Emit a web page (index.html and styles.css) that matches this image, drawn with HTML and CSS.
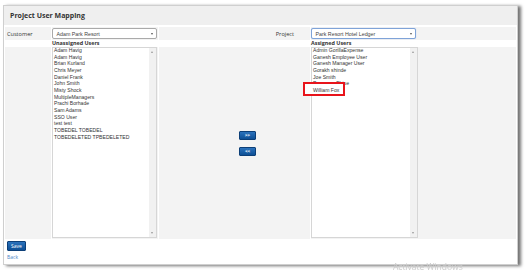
FILE: index.html
```html
<!DOCTYPE html>
<html>
<head>
<meta charset="utf-8">
<title>Project User Mapping</title>
<link rel="stylesheet" href="styles.css">
</head>
<body>
<div class="page">
  <div class="panel">
    <div class="header"><h1 class="title">Project User Mapping</h1></div>
    <div class="form">
      <div class="cell gray lbl">Customer</div>
      <div class="cell gray"><div class="select"><span class="val">Adam Park Resort</span><i class="caret"></i></div></div>
      <div class="cell gray lbl proj">Project</div>
      <div class="cell gray"><div class="select focus"><span class="val">Park Resort Hotel Ledger</span><i class="caret"></i></div></div>

      <div class="cell"></div>
      <div class="cell sub">Unassigned Users</div>
      <div class="cell"></div>
      <div class="cell sub">Assigned Users</div>

      <div class="cell gray"></div>
      <div class="cell gray">
        <div class="listbox">
          <ul class="items">
            <li>Adam Havig</li>
            <li>Adam Havig</li>
            <li>Brian Kurland</li>
            <li>Chris Meyer</li>
            <li>Daniel Frank</li>
            <li>John Smith</li>
            <li>Misty Shock</li>
            <li>MultipleManagers</li>
            <li>Prachi Borhade</li>
            <li>Sam Adams</li>
            <li>SSO User</li>
            <li>test test</li>
            <li>TOBEDEL TOBEDEL</li>
            <li>TOBEDELETED TPBEDELETED</li>
          </ul>
          <div class="scroll"><i class="up"></i><i class="down"></i></div>
        </div>
      </div>
      <div class="cell gray moves">
        <button class="move">&gt;&gt;</button>
        <button class="move">&lt;&lt;</button>
      </div>
      <div class="cell gray">
        <div class="listbox wide">
          <ul class="items">
            <li>Admin GorillaExpense</li>
            <li>Ganesh Employee User</li>
            <li>Ganesh Manager User</li>
            <li>Gorakh shinde</li>
            <li>Joe Smith</li>
            <li>Prasanna Bhise</li>
            <li class="hl">William Fox</li>
          </ul>
          <div class="scroll"><i class="up"></i><i class="down"></i></div>
        </div>
      </div>
    </div>
    <div class="footer">
      <button class="save">Save</button>
      <a class="back" href="#">Back</a>
    </div>
  </div>
</div>
<div class="watermark">Activate Windows</div>
</body>
</html>
```

FILE: styles.css
```css
html, body { margin: 0; padding: 0; background: #fff; overflow: hidden; }
body { width: 530px; height: 273px; font-family: "Liberation Sans", Arial, sans-serif; color: #333; }

.page { padding: 5px 0 0 3px; }

.panel {
  width: 513px;
  border: 1px solid #cfcfcf;
  background: #fff;
  box-shadow: 3px 1px 3px rgba(0,0,0,0.55);
}

.header {
  height: 19px;
  background: #efefef;
  display: flex;
  align-items: center;
  padding-left: 6px;
  margin-bottom: 2px;
}
.title {
  margin: 0;
  font-family: "Open Sans", sans-serif;
  font-weight: 700;
  font-size: 7px;
  color: #333;
  line-height: 1;
}

.form {
  display: grid;
  grid-template-columns: 46px 106px 151px 205px;
  grid-template-rows: 13px 7px 192px;
  column-gap: 1px;
  padding-left: 1px;
}
.cell { position: relative; }
.gray { background: #f3f3f3; }
.lbl {
  font-family: "Open Sans", sans-serif;
  font-size: 5.6px;
  color: #333;
  display: flex;
  align-items: center;
  padding-left: 2px;
}
.proj { justify-content: flex-end; padding-right: 16px; }
.sub {
  font-family: "Open Sans", sans-serif;
  font-weight: 700;
  font-size: 5.4px;
  line-height: 7px;
  color: #333;
}

.select {
  margin-top: 1px;
  height: 11px;
  width: 105px;
  box-sizing: border-box;
  border: 1px solid #aaa;
  border-radius: 2px;
  background: #fff;
  display: flex;
  align-items: center;
  padding-left: 3.5px;
  position: relative;
}
.select.focus { border-color: #7fa3d8; box-shadow: 0 0 1px #9cbbe8; }
.val { font-size: 5.3px; color: #444; white-space: nowrap; }
.caret {
  position: absolute;
  right: 3px;
  top: 4px;
  width: 0; height: 0;
  border-left: 1.5px solid transparent;
  border-right: 1.5px solid transparent;
  border-top: 2px solid #555;
}

.listbox {
  position: relative;
  width: 105px;
  height: 191px;
  box-sizing: border-box;
  border: 1px solid #d6d6d6;
  background: #fff;
}
.listbox.wide { width: 107px; }
.items {
  list-style: none;
  margin: -1px 0 0 0;
  padding: 0 0 0 1px;
  font-size: 5.1px;
  line-height: 6.65px;
  color: #333;
}
.items li { white-space: nowrap; }
.scroll {
  position: absolute;
  right: 0; top: 0; bottom: 0;
  width: 7px;
  background: #f1f1f1;
}
.scroll .up, .scroll .down {
  position: absolute;
  left: 2px;
  width: 0; height: 0;
  border-left: 1.5px solid transparent;
  border-right: 1.5px solid transparent;
}
.scroll .up { top: 3px; border-bottom: 2px solid #999; }
.scroll .down { bottom: 3px; border-top: 2px solid #999; }

.hl { position: relative; z-index: 0; }
.hl::before {
  content: "";
  position: absolute;
  left: -10px;
  top: -5px;
  width: 38px;
  height: 10px;
  border: 2px solid #e8141b;
  background: #fff;
  z-index: -1;
}

.moves {
  display: flex;
  flex-direction: column;
  justify-content: center;
  align-items: flex-start;
  gap: 7px;
  padding-left: 80px;
}
.move, .save {
  font-family: "Open Sans", sans-serif;
  color: #fff;
  border: 1px solid #0c3f78;
  border-radius: 1px;
  background: linear-gradient(#2a72bc, #0e4f95);
  padding: 0;
  margin: 0;
  line-height: 1;
  display: flex;
  align-items: center;
  justify-content: center;
}
.move { width: 17px; height: 9px; font-size: 4.5px; font-weight: 700; }

.footer {
  padding: 2px 0 4px 3px;
  display: flex;
  flex-direction: column;
  align-items: flex-start;
}
.save { width: 19px; height: 10px; font-size: 5px; }
.back {
  margin-top: 3px;
  font-family: "Open Sans", sans-serif;
  font-size: 5px;
  line-height: 6px;
  color: #4a86c5;
  text-decoration: none;
}

.watermark {
  position: fixed;
  left: 393px;
  top: 263px;
  font-family: "Open Sans", sans-serif;
  font-size: 8.5px;
  line-height: 8px;
  color: #cbcbcb;
  white-space: nowrap;
}
```
